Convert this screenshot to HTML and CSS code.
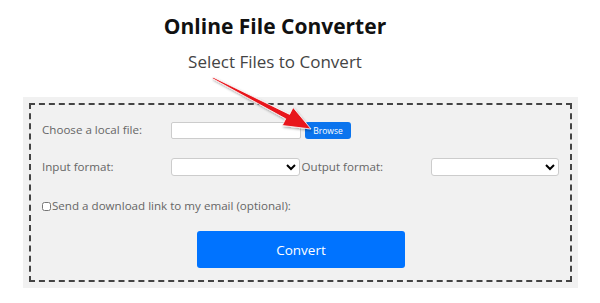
FILE: index.html
```html
<!DOCTYPE html>
<html>
<head>
<meta charset="utf-8">
<link rel="stylesheet" href="styles.css">
</head>
<body>
<div class="page">
  <header class="head">
    <h1 class="title">Online File Converter</h1>
    <h2 class="subtitle">Select Files to Convert</h2>
  </header>
  <div class="panel">
    <form class="panel-inner">
      <div class="row row-file">
        <label class="label">Choose a local file:</label>
        <input class="text-input" type="text">
        <button class="browse" type="button">Browse</button>
      </div>
      <div class="row row-format">
        <label class="label">Input format:</label>
        <select class="select"><option></option></select>
        <label class="label label-out">Output format:</label>
        <select class="select"><option></option></select>
      </div>
      <div class="row row-check">
        <input class="check" type="checkbox">
        <label class="label">Send a download link to my email (optional):</label>
      </div>
      <div class="row row-submit">
        <button class="convert" type="button">Convert</button>
      </div>
    </form>
  </div>
  <svg class="arrow" width="600" height="303" viewBox="0 0 600 303">
    <defs>
      <filter id="sh" x="-20%" y="-20%" width="140%" height="140%">
        <feDropShadow dx="1" dy="1.5" stdDeviation="1.2" flood-color="#000" flood-opacity="0.35"/>
      </filter>
    </defs>
    <polygon points="213,77.2 289.6,114.4 293.1,107.5 311,129 282.3,125.5 285.7,118.8 212.5,78.5" fill="#e8141b" stroke="#fff" stroke-width="0.8" stroke-linejoin="round" filter="url(#sh)"/>
  </svg>
</div>
</body>
</html>
```

FILE: styles.css
```css
html, body {
  margin: 0;
  padding: 0;
  background: #fff;
}
body {
  font-family: "Open Sans", "Noto Sans", sans-serif;
  color: #555;
}
.page {
  position: relative;
  width: 600px;
  height: 303px;
  overflow: hidden;
}
.head {
  width: 550px;
  text-align: center;
}
.title {
  margin: 0;
  padding-top: 11px;
  font-size: 21px;
  line-height: 30px;
  font-weight: 700;
  color: #111;
}
.subtitle {
  margin: 9px 0 0 0;
  font-size: 17px;
  line-height: 24px;
  font-weight: 400;
  color: #444;
}
.panel {
  margin: 23px 22px 0 23px;
  background: #f1f1f1;
  padding: 6px;
}
.panel-inner {
  margin: 0;
  border: 2px dashed #444;
  padding: 16px 11px 12px 11px;
}
.row {
  display: flex;
  align-items: center;
}
.label {
  font-size: 11.6px;
  color: #666;
  line-height: 18px;
}
.row-file .label,
.row-format .label {
  width: 129px;
  flex: none;
}
.row-format .label-out {
  width: 129px;
  padding-left: 2px;
}
.text-input {
  box-sizing: border-box;
  width: 130px;
  height: 17px;
  margin: 0;
  border: 1px solid #ccc;
  border-radius: 2px;
  background: #fff;
}
.browse {
  margin-left: 4px;
  width: 46px;
  height: 17px;
  padding: 0;
  border: none;
  border-radius: 3px;
  background: #0a74ee;
  color: #fff;
  font-family: "Open Sans", sans-serif;
  font-size: 8.5px;
}
.row-format {
  margin-top: 19px;
}
.select {
  box-sizing: border-box;
  width: 129px;
  height: 18px;
  margin: 0;
  border: 1px solid #ccc;
  border-radius: 3px;
  background: #fff;
  font-size: 11px;
}
.row-check {
  margin-top: 21px;
}
.check {
  width: 9px;
  height: 9px;
  margin: 0 1px 0 0;
}
.row-submit {
  margin-top: 16px;
  padding-left: 155px;
}
.convert {
  width: 208px;
  height: 37px;
  border: none;
  border-radius: 3px;
  background: #0073ff;
  color: #fff;
  font-family: "Open Sans", sans-serif;
  font-size: 13.5px;
}
.arrow {
  position: absolute;
  left: 0;
  top: 0;
  pointer-events: none;
}
```
